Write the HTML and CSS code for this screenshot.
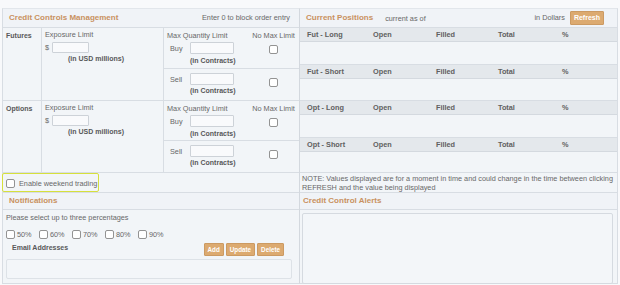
FILE: index.html
```html
<!DOCTYPE html>
<html>
	<head>
		<title>Credit Controls</title>
		<link rel="stylesheet" href="styles.css">
	</head>
	<body>
		<div id="page">
			<div id="controls" class="panel">
				<div class="panel-head">
					<span class="title">Credit Controls Management</span>
					<span class="hint">Enter 0 to block order entry</span>
				</div>
				<div class="limits">
					<div class="kind">Futures</div>
					<div class="exposure">
						<div class="line">Exposure Limit</div>
						<div class="money"><span>$</span><input type="text" class="field-sm"></div>
						<div class="usd">(in USD millions)</div>
					</div>
					<div class="qty">
						<div class="qty-row buy">
							<div class="qty-title">Max Quantity Limit</div>
							<div class="nomax-title">No Max Limit</div>
							<div class="side">Buy</div>
							<input type="text" class="field">
							<span class="cell-box"><input type="checkbox" class="box"></span>
							<div class="unit">(in Contracts)</div>
						</div>
						<div class="qty-row sell">
							<div class="side">Sell</div>
							<input type="text" class="field">
							<span class="cell-box"><input type="checkbox" class="box"></span>
							<div class="unit">(in Contracts)</div>
						</div>
					</div>
				</div>
				<div class="limits short">
					<div class="kind">Options</div>
					<div class="exposure">
						<div class="line">Exposure Limit</div>
						<div class="money"><span>$</span><input type="text" class="field-sm"></div>
						<div class="usd">(in USD millions)</div>
					</div>
					<div class="qty">
						<div class="qty-row buy">
							<div class="qty-title">Max Quantity Limit</div>
							<div class="nomax-title">No Max Limit</div>
							<div class="side">Buy</div>
							<input type="text" class="field">
							<span class="cell-box"><input type="checkbox" class="box"></span>
							<div class="unit">(in Contracts)</div>
						</div>
						<div class="qty-row sell">
							<div class="side">Sell</div>
							<input type="text" class="field">
							<span class="cell-box"><input type="checkbox" class="box"></span>
							<div class="unit">(in Contracts)</div>
						</div>
					</div>
				</div>
				<div class="weekend-row">
					<label class="weekend"><input type="checkbox" class="box">Enable weekend trading</label>
				</div>
				<div class="panel-head sub">
					<span class="title">Notifications</span>
				</div>
				<div class="notify">
					<div class="line">Please select up to three percentages</div>
					<div class="percents">
						<label><input type="checkbox" class="box">50%</label>
						<label><input type="checkbox" class="box">60%</label>
						<label><input type="checkbox" class="box">70%</label>
						<label><input type="checkbox" class="box">80%</label>
						<label><input type="checkbox" class="box">90%</label>
					</div>
					<div class="email-row">
						<b class="email-label">Email Addresses</b>
						<div class="buttons">
							<button class="btn">Add</button>
							<button class="btn">Update</button>
							<button class="btn">Delete</button>
						</div>
					</div>
					<div class="email-box"></div>
				</div>
			</div>
			<div id="positions" class="panel">
				<div class="panel-head">
					<span class="title">Current Positions</span>
					<span class="asof">current as of</span>
					<span class="currency">in Dollars</span>
					<button class="btn refresh">Refresh</button>
				</div>
				<div class="pos-head"><span>Fut - Long</span><span>Open</span><span>Filled</span><span>Total</span><span>%</span></div>
				<div class="pos-body"></div>
				<div class="pos-head"><span>Fut - Short</span><span>Open</span><span>Filled</span><span>Total</span><span>%</span></div>
				<div class="pos-body b22"></div>
				<div class="pos-head"><span>Opt - Long</span><span>Open</span><span>Filled</span><span>Total</span><span>%</span></div>
				<div class="pos-body"></div>
				<div class="pos-head"><span>Opt - Short</span><span>Open</span><span>Filled</span><span>Total</span><span>%</span></div>
				<div class="pos-body b21"></div>
				<div class="note">NOTE: Values displayed are for a moment in time and could change in the time between clicking REFRESH and the value being displayed</div>
				<div class="panel-head sub">
					<span class="title">Credit Control Alerts</span>
				</div>
				<div class="alerts"></div>
			</div>
		</div>
	</body>
</html>
```

FILE: styles.css
```css
* {
	box-sizing: border-box;
}

body {
	margin: 0;
	background: #f8f9fb;
	font-family: "Liberation Sans", Arial, sans-serif;
	font-size: 7.3px;
	color: #686868;
}

#page {
	display: grid;
	grid-template-columns: 298px 318px;
	padding: 8px 0 0 2px;
}

.panel {
	height: 276px;
	background: #f2f5f8;
	border: 1px solid #d8dde3;
	border-top-color: #e2e6eb;
}

#controls {
	border-right: 1px solid #d3d8de;
}

#positions {
	border-left: none;
}

.panel-head {
	display: flex;
	align-items: center;
	height: 19px;
	padding: 0 9px 1px 6px;
	background: #f0f3f7;
	border-bottom: 1px solid #d8dde3;
}

.panel-head.sub {
	height: 17px;
	padding-left: 6px;
}

.title {
	font-weight: bold;
	font-size: 8px;
	color: #c99160;
}

.hint {
	margin-left: auto;
}

/* limits grid */

.limits {
	display: grid;
	grid-template-columns: 39px 122px 1fr;
	height: 73px;
	border-bottom: 1px solid #d8dde3;
}

.limits.short {
	height: 72px;
}

.kind {
	padding: 3px 3px;
	line-height: 10px;
	font-weight: bold;
	font-size: 7px;
	color: #585858;
	border-right: 1px solid #d8dde3;
}

.exposure {
	padding: 2px 3px;
	border-right: 1px solid #d8dde3;
}

.line {
	line-height: 10px;
}

.money {
	display: flex;
	align-items: center;
	gap: 3px;
	margin-top: 2px;
	height: 11px;
}

.usd, .unit {
	line-height: 9px;
	font-weight: bold;
	font-size: 7px;
	color: #585858;
}

.usd {
	margin: 1px 0 0 23px;
}

.field-sm, .field {
	margin: 0;
	padding: 0;
	border: 1px solid #cdd2d8;
	border-radius: 1px;
	background: #f9fafc;
	font: inherit;
}

.field-sm {
	width: 37px;
	height: 11px;
}

.field {
	width: 44px;
	height: 12px;
}

.qty-row {
	display: grid;
	grid-template-columns: 26px 62px 43px;
	align-items: center;
}

.qty-row.buy {
	grid-template-rows: 10px 12px 10px;
	row-gap: 2px;
	height: 41px;
	padding-top: 2px;
	border-bottom: 1px solid #d8dde3;
}

.qty-row.sell {
	grid-template-rows: 12px 10px;
	padding-top: 4px;
}

.short .qty-row.buy {
	height: 40px;
}

.qty-title {
	grid-column: 1 / 3;
	padding-left: 3px;
}

.nomax-title {
	text-align: center;
	white-space: nowrap;
}

.side {
	padding-left: 6px;
}

.cell-box {
	display: flex;
	justify-content: center;
	align-self: end;
	height: 9px;
}

.sell .cell-box {
	align-self: start;
	margin-top: 5px;
}

.unit {
	grid-column: 2 / 4;
	align-self: end;
	line-height: 10px;
}

.sell .unit {
	align-self: start;
	margin-top: 1px;
}

.box {
	appearance: none;
	width: 9px;
	height: 9px;
	margin: 0;
	border: 1px solid #939393;
	border-radius: 2px;
	background: #fff;
}

/* weekend + notifications */

.weekend-row {
	height: 20px;
	border-bottom: 1px solid #d8dde3;
}

.weekend {
	display: inline-flex;
	align-items: center;
	gap: 4px;
	width: 97px;
	height: 19px;
	margin-left: -1px;
	padding: 2px 0 0 3px;
	border: 1.5px solid #d6e03c;
	border-radius: 2px;
}

.notify {
	padding: 3px 7px 0 3px;
}

.percents {
	display: flex;
	margin-top: 7px;
}

.percents label {
	display: flex;
	align-items: center;
	gap: 2px;
	width: 33px;
}

.email-row {
	display: flex;
	margin-top: 4px;
	height: 14px;
}

.email-label {
	padding: 0 0 0 6px;
	line-height: 9px;
	font-size: 7px;
	color: #585858;
}

.buttons {
	display: flex;
	gap: 2px;
	margin: 0 8px 0 auto;
}

.btn {
	height: 13px;
	padding: 0 3px;
	border: 1px solid #cc9a62;
	border-radius: 1px;
	background: #dcaa70;
	color: #fff;
	font: bold 6.3px "Liberation Sans", Arial, sans-serif;
}

.email-box {
	height: 20px;
	margin-top: 2px;
	border: 1px solid #dde2e7;
	border-radius: 2px;
	background: #f3f6f9;
}

/* positions */

.asof {
	margin-left: 12px;
	margin-top: 1px;
}

.currency {
	margin-left: auto;
}

#positions .panel-head {
	padding-right: 13px;
}

#positions .panel-head.sub {
	padding-left: 3px;
}

.refresh {
	margin-left: 5px;
	padding: 0 3px;
	height: 14px;
	font-size: 7px;
}

.pos-head {
	display: grid;
	grid-template-columns: 66px 63px 62px 64px 1fr;
	align-items: center;
	height: 14px;
	padding-left: 7px;
	background: #e4e8ec;
	border-bottom: 1px solid #d4d9df;
	font-weight: bold;
	font-size: 7.3px;
	color: #606060;
}

.pos-body {
	height: 23px;
	border-bottom: 1px solid #d8dde3;
}

.pos-body.b22 {
	height: 22px;
}

.pos-body.b21 {
	height: 21px;
}

.note {
	height: 20px;
	padding: 1px 2px;
	line-height: 9px;
	border-bottom: 1px solid #d8dde3;
}

.alerts {
	height: 71px;
	margin: 3px 4px 0 2px;
	border: 1px solid #d5dae0;
	border-radius: 2px;
	background: #f3f6f9;
}
```
